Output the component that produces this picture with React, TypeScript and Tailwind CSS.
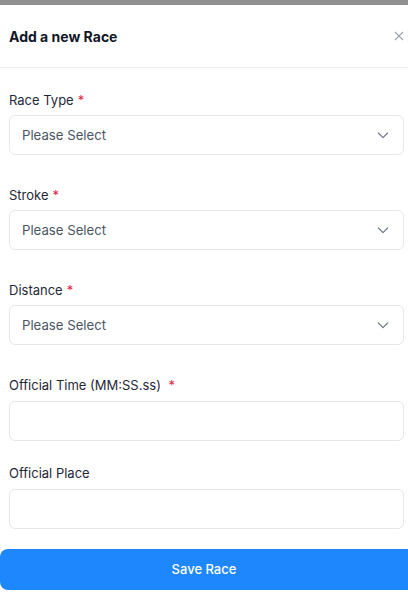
import React from "react";

function Chevron() {
  return (
    <svg width="16" height="16" viewBox="0 0 24 24" fill="none" stroke="#6b7280" strokeWidth="1.6" strokeLinecap="round" strokeLinejoin="round">
      <path d="M5 9l7 7 7-7" />
    </svg>
  );
}

function Req() {
  return <span className="text-[#e11d48] ml-1">*</span>;
}

function SelectField({ label }: { label: string }) {
  return (
    <div className="flex flex-col">
      <div className="text-[13px] leading-[18px] text-[#1f2937] h-[18px]">
        {label}
        <Req />
      </div>
      <div className="mt-[6px] h-[40px] rounded-[6px] border border-[#e5e7eb] flex items-center justify-between pl-[12px] pr-[12px]">
        <span className="text-[13.2px] text-[#4b5563] pt-[1px]">Please Select</span>
        <Chevron />
      </div>
    </div>
  );
}

export default function App() {
  return (
    <div className="w-[408px] h-[615px] bg-white overflow-hidden" style={{ fontFamily: "Inter, 'Noto Sans', sans-serif" }}>
      <div className="h-[5px] bg-[#909090]" />
      <div className="h-[63px] flex items-center justify-between pl-[9px] pr-[4px] border-b border-[#eceef0]">
        <span className="text-[14px] font-bold text-[#111827]">Add a new Race</span>
        <svg width="10" height="10" viewBox="0 0 10 10" stroke="#9ca3af" strokeWidth="1.1" className="mb-[1px]">
          <path d="M1 1l8 8M9 1l-8 8" />
        </svg>
      </div>
      <div className="pl-[9px] pr-[4px] pt-[23px] flex flex-col gap-[31px]">
        <SelectField label="Race Type" />
        <SelectField label="Stroke" />
        <SelectField label="Distance" />
        <div className="flex flex-col">
          <div className="text-[13px] leading-[18px] text-[#1f2937] h-[18px]">
            Official Time (MM:SS.ss) <span className="text-[#e11d48] ml-1">*</span>
          </div>
          <div className="mt-[7px] h-[40px] rounded-[6px] border border-[#e5e7eb]" />
        </div>
        <div className="flex flex-col -mt-[8px]">
          <div className="text-[13px] leading-[18px] text-[#1f2937] h-[18px]">Official Place</div>
          <div className="mt-[7px] h-[40px] rounded-[6px] border border-[#e5e7eb]" />
        </div>
      </div>
      <div className="mt-[20px] h-[41px] w-[420px] bg-[#1e87fd] rounded-[8px] flex items-center justify-center">
        <span className="text-[13px] font-medium text-white pr-[12px]">Save Race</span>
      </div>
    </div>
  );
}
